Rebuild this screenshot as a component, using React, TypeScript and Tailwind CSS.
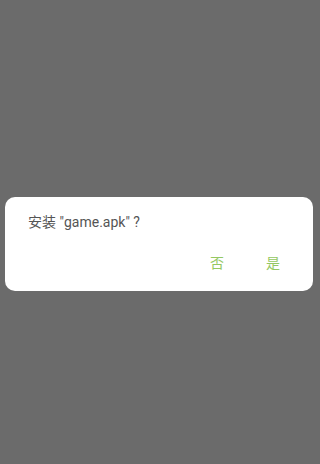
export default function App() {
  return (
    <div
      className="w-[320px] h-[464px] bg-[#6b6b6b] pt-[197px] pl-[5px]"
      style={{ fontFamily: 'Roboto, "Noto Sans CJK SC", sans-serif' }}
    >
      <div className="w-[308px] h-[94px] rounded-[10px] bg-white flex flex-col">
        <div className="pl-[23px] pt-[15px] text-[14px] leading-[20px] text-[#555555]">
          安装 "game.apk" ?
        </div>
        <div className="flex justify-end pr-[33px] pt-[21px] gap-[42px] text-[14px] leading-[20px] text-[#94c862]">
          <span>否</span>
          <span>是</span>
        </div>
      </div>
    </div>
  );
}
